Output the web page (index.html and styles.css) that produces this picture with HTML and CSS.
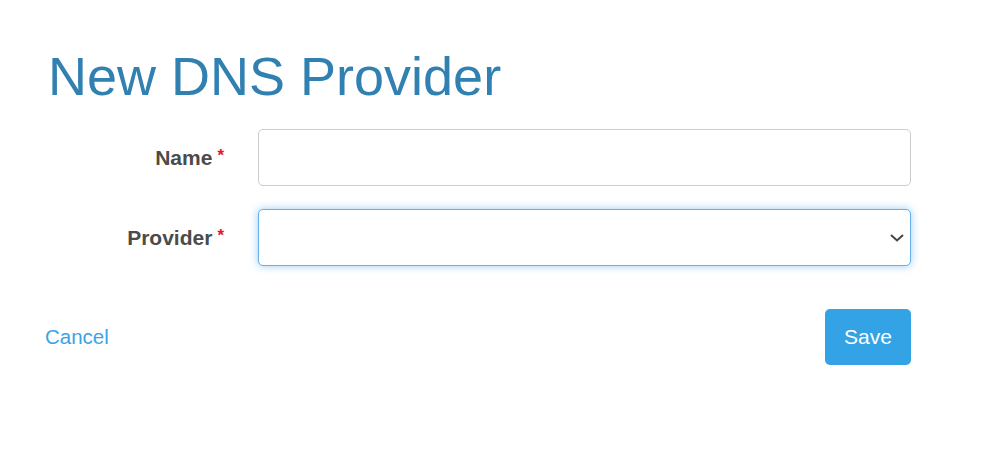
FILE: index.html
```html
<!DOCTYPE html>
<html>
  <head>
    <title>New DNS Provider</title>
    <meta charset="utf-8" />
    <meta name="viewport" content="width=device-width, initial-scale=1" />
    <link rel="stylesheet" href="styles.css">
  </head>
  <body>
    <div class="page">
      <h1>New DNS Provider</h1>

      <form id="provider-form" class="form">
        <div class="form-row">
          <label for="name-input" class="form-label">
            Name<span class="required">*</span>
          </label>
          <input type="text" id="name-input" class="form-control" />
        </div>

        <div class="form-row">
          <label for="provider-select" class="form-label">
            Provider<span class="required">*</span>
          </label>
          <div class="select-wrap">
            <select id="provider-select" class="form-control is-focused">
              <option value=""></option>
            </select>
            <svg class="select-arrow" width="14" height="8" viewBox="0 0 14 8">
              <path d="M1 1 L7 6.5 L13 1" fill="none" stroke="#444" stroke-width="2" />
            </svg>
          </div>
        </div>

        <div class="form-actions">
          <a href="#" class="link">Cancel</a>
          <button type="submit" class="button">Save</button>
        </div>
      </form>
    </div>
  </body>
</html>
```

FILE: styles.css
```css
:root {
  --primary: #33a3e6;
  --border: #cccccc;
  --radius: 5px;
}

* {
  box-sizing: border-box;
}

body {
  margin: 0;
  background: #ffffff;
  font-family: "Liberation Sans", Arial, sans-serif;
  font-size: 20.5px;
  color: #4a4a4a;
}

.page {
  width: 867px;
  margin: 0 0 0 44px;
  padding-top: 47px;
}

h1 {
  margin: 0 0 23px 0;
  padding-left: 4px;
  font-size: 54px;
  font-weight: normal;
  line-height: 1.1;
  color: #3180b2;
}

.form-row {
  display: grid;
  grid-template-columns: 214px 1fr;
  align-items: center;
  margin-bottom: 23px;
}

.form-label {
  text-align: right;
  padding-right: 34px;
  font-size: 21px;
  font-weight: bold;
  color: #4b4b4b;
}

.required {
  font-size: 17px;
  color: #e8141b;
  vertical-align: 4px;
  margin-left: 5px;
}

.form-control {
  display: block;
  width: 100%;
  height: 57px;
  padding: 0 16px;
  font-family: inherit;
  font-size: 20px;
  border: 1px solid var(--border);
  border-radius: var(--radius);
  background: #ffffff;
}

select.form-control {
  appearance: none;
  -webkit-appearance: none;
}

.form-control.is-focused {
  border-color: #66afe9;
  outline: none;
  box-shadow: 0 0 9px rgba(102, 175, 233, 0.65);
}

.select-wrap {
  position: relative;
}

.select-arrow {
  position: absolute;
  right: 7px;
  top: 25px;
  pointer-events: none;
}

.form-actions {
  display: flex;
  justify-content: space-between;
  align-items: center;
  margin-top: 43px;
}

.link {
  padding-left: 1px;
  color: #3aa3e8;
  text-decoration: none;
}

.button {
  width: 86px;
  height: 56px;
  font-family: inherit;
  font-size: 21px;
  color: #ffffff;
  background: var(--primary);
  border: none;
  border-radius: var(--radius);
  cursor: pointer;
}
```
